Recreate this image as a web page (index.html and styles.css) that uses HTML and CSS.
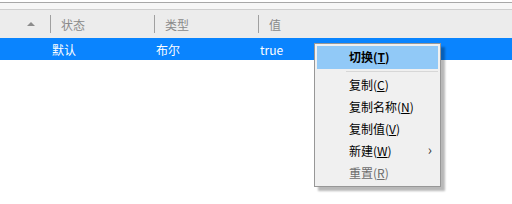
FILE: index.html
```html
<!DOCTYPE html>
<html>
<head>
<meta charset="utf-8">
<link rel="stylesheet" href="styles.css">
</head>
<body>
<div class="top"></div>
<div class="strip"></div>
<div class="header">
  <div class="hcell first"><span class="sort"></span></div>
  <div class="hcell c2">状态</div>
  <div class="hcell c3">类型</div>
  <div class="hcell c4">值</div>
</div>
<div class="row">
  <div class="cell first"></div>
  <div class="cell c2">默认</div>
  <div class="cell c3">布尔</div>
  <div class="cell c4">true</div>
</div>
<div class="menu">
  <div class="item hot"><b>切换(<u>T</u>)</b></div>
  <div class="sep"></div>
  <div class="item">复制(<u>C</u>)</div>
  <div class="item">复制名称(<u>N</u>)</div>
  <div class="item">复制值(<u>V</u>)</div>
  <div class="item">新建(<u>W</u>)<span class="arrow">›</span></div>
  <div class="item dis">重置(<u>R</u>)</div>
</div>
</body>
</html>
```
FILE: styles.css
```css
html, body {
  margin: 0;
  padding: 0;
  background: #ffffff;
  font-family: "Noto Sans CJK SC", "Noto Sans", sans-serif;
  font-size: 12px;
}
.top {
  height: 2px;
  border-bottom: 1px solid #a8a8a8;
}
.strip {
  height: 6px;
  background: #f7f7f7;
  border-bottom: 1px solid #cfcfcf;
}
.header {
  height: 28px;
  background: #ececec;
  display: flex;
  align-items: center;
  color: #8a8a8a;
}
.hcell, .cell {
  box-sizing: border-box;
  height: 100%;
  display: flex;
  align-items: center;
}
.first { width: 50px; }
.c2 { width: 104px; }
.c3 { width: 104px; }
.c4 { flex: 1; }
.hcell { position: relative; }
.hcell.c2, .hcell.c3, .hcell.c4 {
  padding-left: 11px;
}
.hcell.c2::before, .hcell.c3::before, .hcell.c4::before {
  content: "";
  position: absolute;
  left: 0;
  top: 5px;
  height: 18px;
  width: 1px;
  background: #a0a0a0;
}
.sort {
  margin-left: 27px;
  width: 0;
  height: 0;
  border-left: 4px solid transparent;
  border-right: 4px solid transparent;
  border-bottom: 4px solid #8c8c8c;
}
.row {
  height: 22px;
  background: #0a84fe;
  color: #ffffff;
  display: flex;
}
.cell.c2, .cell.c3, .cell.c4 { padding-left: 2px; }
.menu {
  position: absolute;
  left: 314px;
  top: 43px;
  width: 125px;
  padding: 2px 0 2px;
  background: #f0f0f0;
  border: 1px solid #979797;
  box-shadow: 4px 4px 2px rgba(0, 0, 0, 0.28);
  color: #000;
}
.item {
  position: relative;
  height: 22px;
  line-height: 21px;
  margin: 0 2px;
  padding-left: 32px;
}
.item u { text-underline-offset: 1px; }
.item.hot {
  background: #91c9f7;
  height: 23px;
  line-height: 22px;
}
.sep {
  height: 1px;
  background: #d7d7d7;
  margin: 2px 2px 2px 31px;
}
.arrow {
  position: absolute;
  right: 6px;
  top: -1px;
  font-size: 14px;
  color: #333;
}
.dis { color: #6d6d6d; }
```
